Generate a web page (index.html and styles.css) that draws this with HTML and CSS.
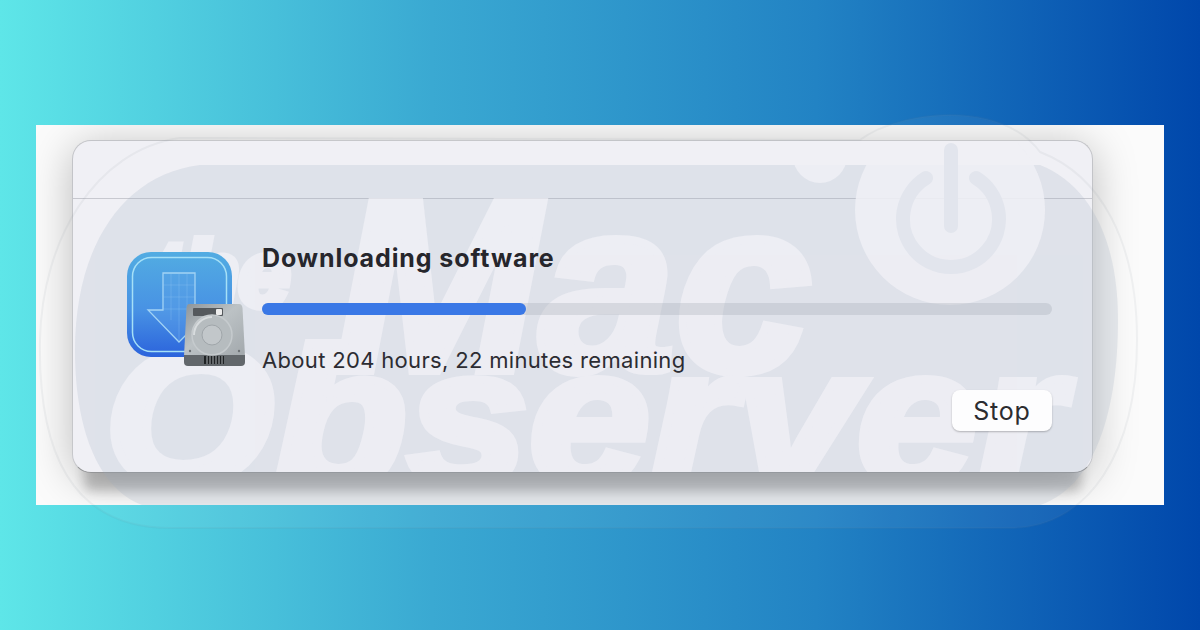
FILE: index.html
```html
<!DOCTYPE html>
<html lang="en">
<head>
  <meta charset="UTF-8" />
  <title>Downloading software</title>
  <link rel="stylesheet" href="styles.css">
</head>
<body>
  <div class="sheet">
    <div class="window">
      <div class="titlebar"></div>
      <div class="content">
        <svg class="app-icon" width="118" height="114" viewBox="0 0 118 114">
          <defs>
            <linearGradient id="tile" x1="0" y1="0" x2="0" y2="1">
              <stop offset="0" stop-color="#52ace2"/>
              <stop offset="0.55" stop-color="#4892e4"/>
              <stop offset="1" stop-color="#2b63dc"/>
            </linearGradient>
            <linearGradient id="disk" x1="0" y1="0" x2="1" y2="1">
              <stop offset="0" stop-color="#8c9398"/>
              <stop offset="0.45" stop-color="#bcc2c5"/>
              <stop offset="1" stop-color="#a2a8ac"/>
            </linearGradient>
          </defs>
          <rect x="0" y="0" width="105" height="105" rx="24" fill="url(#tile)"/>
          <rect x="5.5" y="5.5" width="94" height="94" rx="19" fill="none" stroke="#a5e0f7" stroke-width="1.5"/>
          <path d="M36 21H68V58H84L52 90L21 58H36Z" fill="#66aaea" fill-opacity=".3" stroke="#a2d3f5" stroke-width="1.3"/>
          <path d="M44 22V68M52 22V88M60 22V68M36 33H68M36 45H68M36 57H68" stroke="#9ccdf3" stroke-opacity=".28" stroke-width="1"/>
          <path d="M62 52H112Q115 52 115.500 56L118 104H57L59.500 56Q60 52 62 52Z" fill="url(#disk)"/>
          <path d="M57 103H118V110Q118 114 114 114H61Q57 114 57 110Z" fill="#62676b"/>
          <rect x="66" y="56" width="30" height="8" rx="1" fill="#55595d"/>
          <rect x="89" y="57" width="6" height="6" rx="1" fill="#ececec"/>
          <circle cx="85" cy="83" r="20" fill="#b6bcbf" stroke="#c6cbce" stroke-width="1.500"/>
          <path d="M67 83A18 18 0 0 1 85 65" fill="none" stroke="#d8dcde" stroke-width="2"/>
          <circle cx="85" cy="83" r="10" fill="#c2c7ca" stroke="#a0a6aa" stroke-width="1"/>
          <circle cx="63" cy="99" r="1.200" fill="#6c7175"/>
          <circle cx="112" cy="99" r="1.200" fill="#6c7175"/>
          <rect x="77" y="104" width="20" height="8" fill="#1f2224"/>
          <path d="M80 104v8M83 104v8M86 104v8M89 104v8M92 104v8M95 104v8" stroke="#a9adb0" stroke-width="1"/>
        </svg>
        <div class="main">
          <div class="title">Downloading software</div>
          <div class="track"><div class="fill"></div></div>
          <div class="status">About 204 hours, 22 minutes remaining</div>
          <div class="actions"><button class="stop" type="button">Stop</button></div>
        </div>
      </div>
    </div>
  </div>

  <!-- site watermark, sits over the window background but under its content -->
  <svg class="watermark" width="1200" height="630" viewBox="0 0 1200 630">
    <defs>
      <clipPath id="winclip"><rect x="73" y="141" width="1019" height="331" rx="18"/></clipPath>
      <clipPath id="sheetclip"><rect x="36" y="125" width="1128" height="380"/></clipPath>
    </defs>
    <path class="wm-ring" d="M180 138C95 150 42 240 40 340C38 450 70 528 170 528H1010C1090 528 1137 450 1137 340C1137 240 1100 175 1040 152C1020 125 985 115 950 115C915 115 880 125 860 140Z"/>
    <path class="wm-blob" clip-path="url(#sheetclip)" d="M200 165H1040C1090 185 1118 240 1118 320C1118 420 1090 510 1010 510H170C105 510 75 440 75 350C75 250 120 175 200 165Z"/>
    <g class="wm-light" clip-path="url(#winclip)">
      <circle cx="950" cy="210" r="95"/>
      <circle cx="820" cy="156" r="27"/>
      <text class="wm-text" x="335" y="371" font-size="245">Mac</text>
      <text class="wm-text" transform="translate(104 484) scale(1.12 1)" font-size="195">Observer</text>
      <text class="wm-text" transform="translate(152 306)" font-size="92">the</text>
    </g>
    <g class="wm-power" clip-path="url(#winclip)">
      <path d="M926 178A48 48 0 1 0 976 178"/>
      <path d="M951 150V226"/>
    </g>
  </svg>
</body>
</html>
```

FILE: styles.css
```css
html, body {
  margin: 0;
  padding: 0;
}
body {
  position: relative;
  width: 1200px;
  height: 630px;
  overflow: hidden;
  box-sizing: border-box;
  padding: 125px 36px;
  background: linear-gradient(90deg, #5ee6e8 0%, #3aa9d2 36%, #2283c4 68%, #0047ab 100%);
  font-family: Inter, "Liberation Sans", sans-serif;
}
.sheet {
  height: 380px;
  box-sizing: border-box;
  padding: 15px 71px 0 36px;
  background: #fbfbfb;
  overflow: hidden;
}
.window {
  height: 333px;
  box-sizing: border-box;
  background: #f0f0f5;
  border: 1px solid #c3c4c8;
  border-bottom-color: #8f9092;
  border-radius: 19px;
  box-shadow: 0 6px 44px rgba(0, 0, 0, 0.26), 0 30px 12px -12px rgba(0, 0, 0, 0.24);
}
.titlebar {
  height: 57px;
  border-bottom: 1px solid #c6c7ce;
}
.content {
  position: relative;
  z-index: 2;
  display: flex;
  gap: 17px;
  padding: 53px 40px 0 54px;
}
.app-icon {
  flex: none;
  display: block;
}
.main {
  flex: 1;
  min-width: 0;
}
.title {
  margin-top: -9px;
  font-size: 25px;
  line-height: 30px;
  letter-spacing: 0.9px;
  font-weight: 700;
  color: #26262c;
}
.track {
  height: 12px;
  margin-top: 30px;
  border-radius: 6px;
  background: rgba(165, 170, 180, 0.32);
}
.fill {
  width: 264px;
  height: 12px;
  border-radius: 6px;
  background: #3a78e6;
}
.status {
  margin-top: 30px;
  font-size: 22px;
  line-height: 30px;
  letter-spacing: 0.33px;
  color: #2c2c32;
}
.actions {
  display: flex;
  justify-content: flex-end;
  margin-top: 15px;
}
.stop {
  width: 100px;
  height: 41px;
  padding: 0;
  border: none;
  border-radius: 8px;
  background: #fdfdfe;
  box-shadow: 0 1px 2px rgba(0, 0, 0, 0.25);
  font-family: inherit;
  font-size: 25px;
  letter-spacing: 0.8px;
  color: #2c2c30;
}
.watermark {
  position: absolute;
  left: 0;
  top: 0;
  z-index: 1;
  pointer-events: none;
}
.wm-ring {
  fill: rgba(255, 255, 255, 0.05);
  stroke: rgba(120, 130, 140, 0.08);
  stroke-width: 2;
}
.wm-blob {
  fill: rgba(155, 170, 190, 0.2);
}
.wm-light {
  opacity: 0.88;
  fill: #efeff5;
}
.wm-text {
  font-family: "Liberation Sans", sans-serif;
  font-weight: 700;
  font-style: italic;
  stroke: #efeff5;
  stroke-width: 8;
}
.wm-power path {
  fill: none;
  stroke: #e2e5ed;
  stroke-width: 14;
  stroke-linecap: round;
}
```
